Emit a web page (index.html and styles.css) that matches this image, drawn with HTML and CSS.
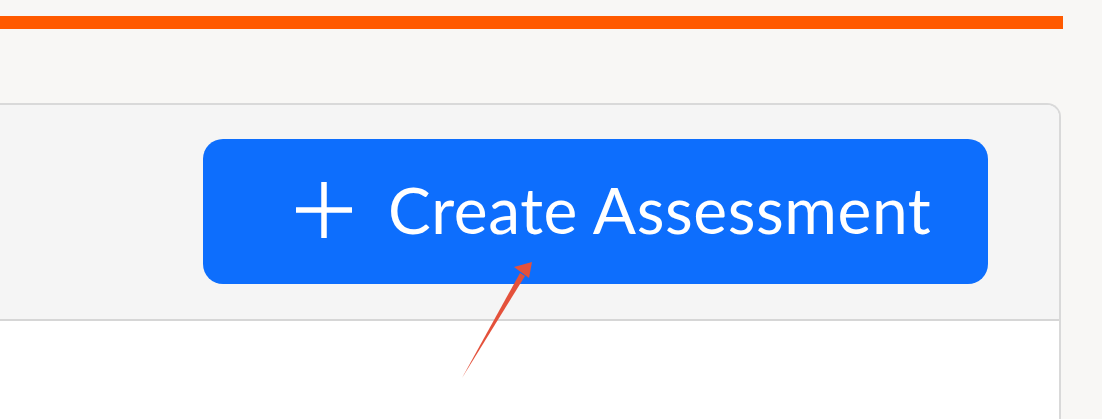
FILE: index.html
```html
<!DOCTYPE html>
<html lang="en">
<head>
    <meta charset="UTF-8">
    <meta name="viewport" content="width=device-width, initial-scale=1.0">
    <title>Assessments</title>
    <link rel="stylesheet" href="styles.css">
</head>

<body>
    <div class="top-bar"></div>

    <div class="card">
        <div class="card-header">
            <button class="btn-create" type="button">
                <svg class="plus-icon" viewBox="0 0 56 56" width="56" height="56" aria-hidden="true">
                    <path d="M28 0 V56 M0 28 H56" stroke="#fff" stroke-width="5.5" fill="none"/>
                </svg>
                <span>Create Assessment</span>
            </button>
        </div>
        <div class="card-body"></div>
    </div>

    <!-- annotation arrow -->
    <svg class="pointer-arrow" width="1102" height="419" viewBox="0 0 1102 419" aria-hidden="true">
        <polygon points="462,378 520,273 525,276" fill="#e4513b"/>
        <polygon points="532,262 514,267 529,278" fill="#e4513b"/>
    </svg>
</body>
</html>
```

FILE: styles.css
```css
/* General Styles */
body {
    margin: 0;
    padding: 0;
    background-color: #f8f7f5;
    font-family: 'Lato', sans-serif;
    overflow: hidden;
    height: 419px;
    position: relative;
}

.top-bar {
    margin-top: 16px;
    width: 1063px;
    height: 13px;
    background-color: #ff5a00;
}

.card {
    margin-top: 74px;
    margin-left: -20px;
    width: 1077px;
    border: 2px solid #d9d9d9;
    border-bottom: none;
    border-radius: 14px 14px 0 0;
    background-color: #fff;
    overflow: hidden;
}

.card-header {
    display: flex;
    justify-content: flex-end;
    padding: 34px 71px 35px 0;
    background-color: #f5f5f5;
    border-bottom: 2px solid #d6d6d6;
}

.card-body {
    height: 110px;
}

.btn-create {
    display: flex;
    align-items: center;
    gap: 36px;
    width: 785px;
    height: 145px;
    padding: 0 0 4px 93px;
    background-color: #0d6efd;
    color: #fff;
    border: none;
    border-radius: 20px;
    font-family: 'Lato', sans-serif;
    font-size: 64px;
    letter-spacing: 0.6px;
    cursor: pointer;
}

.plus-icon {
    flex-shrink: 0;
}

.pointer-arrow {
    position: absolute;
    left: 0;
    top: 0;
    pointer-events: none;
}
```
